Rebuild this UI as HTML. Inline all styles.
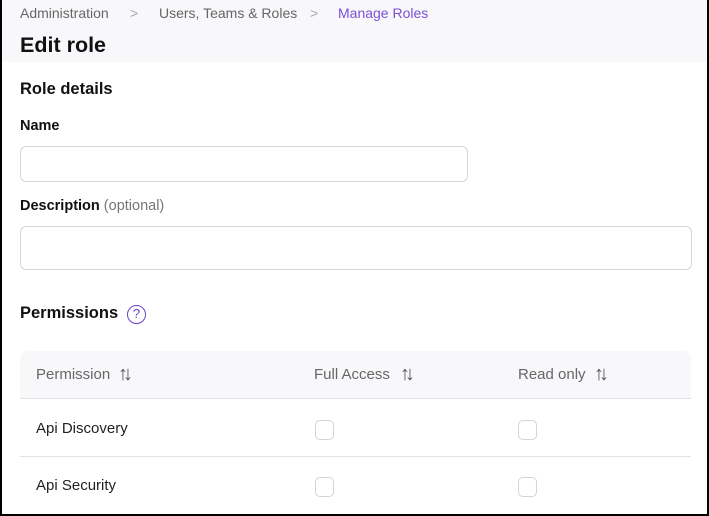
<!DOCTYPE html>
<html><head><style>
*{margin:0;padding:0;box-sizing:border-box}
body{width:709px;height:516px;overflow:hidden;background:#fff;font-family:"Liberation Sans",sans-serif;color:#111;position:relative}
.frame{position:absolute;left:0;top:0;width:709px;height:516px;border:2px solid #000;border-top:none}
.hdr{position:absolute;left:2px;top:0;width:705px;height:62px;background:#f8f8fb}
.a{position:absolute;white-space:nowrap}
.bc{font-size:14px;color:#666;top:5px}
.ta{position:absolute;border:1px solid #d6d6dc;border-radius:6px;background:#fff}
.th{position:absolute;left:20px;top:351px;width:671px;height:48px;background:#f8f8fb;border-radius:8px 8px 0 0;border-bottom:1px solid #e2e2e6}
.row{position:absolute;left:20px;width:671px;border-bottom:1px solid #e2e2e6}
.cb{position:absolute;width:19px;height:20px;border:1px solid #d4d4d8;border-radius:5px}
.hc{font-size:15px;color:#666;top:366px}
.rc{font-size:15px;color:#222}
.s{position:absolute;top:-3px;font-size:20px;letter-spacing:-5px;color:#555}
</style></head><body>
<div class="hdr"></div>
<div class="a bc" style="left:20px">Administration</div>
<div class="a bc" style="left:130px;color:#aaa">&gt;</div>
<div class="a bc" style="left:159px">Users, Teams &amp; Roles</div>
<div class="a bc" style="left:310px;color:#aaa">&gt;</div>
<div class="a bc" style="left:338px;color:#7b4fd6">Manage Roles</div>
<div class="a" style="left:20px;top:33px;font-size:21.5px;font-weight:bold">Edit role</div>
<div class="a" style="left:20px;top:80px;font-size:16.5px;font-weight:bold">Role details</div>
<div class="a" style="left:20px;top:118px;font-size:14.5px;font-weight:bold">Name</div>
<div class="ta" style="left:20px;top:146px;width:448px;height:36px"></div>
<div class="a" style="left:20px;top:198px;font-size:14.5px;font-weight:bold">Description <span style="font-weight:normal;color:#777">(optional)</span></div>
<div class="ta" style="left:20px;top:226px;width:672px;height:44px"></div>
<div class="a" style="left:20px;top:304px;font-size:16.5px;font-weight:bold">Permissions</div>
<div class="a" style="left:127px;top:305px;width:19px;height:19px;border:1.5px solid #6a3fd0;border-radius:50%;color:#6a3fd0;font-size:13px;text-align:center;line-height:16px">?</div>
<div class="th"></div>
<div class="a hc" style="left:36px">Permission<span class="s" style="left:82px">↑↓</span></div>
<div class="a hc" style="left:314px">Full Access<span class="s" style="left:86px">↑↓</span></div>
<div class="a hc" style="left:518px">Read only<span class="s" style="left:76px">↑↓</span></div>
<div class="row" style="top:399px;height:58px"></div>
<div class="a rc" style="left:36px;top:420px">Api Discovery</div>
<div class="cb" style="left:315px;top:420px"></div>
<div class="cb" style="left:518px;top:420px"></div>
<div class="a rc" style="left:36px;top:477px">Api Security</div>
<div class="cb" style="left:315px;top:477px"></div>
<div class="cb" style="left:518px;top:477px"></div>
<div class="frame"></div>
</body></html>
